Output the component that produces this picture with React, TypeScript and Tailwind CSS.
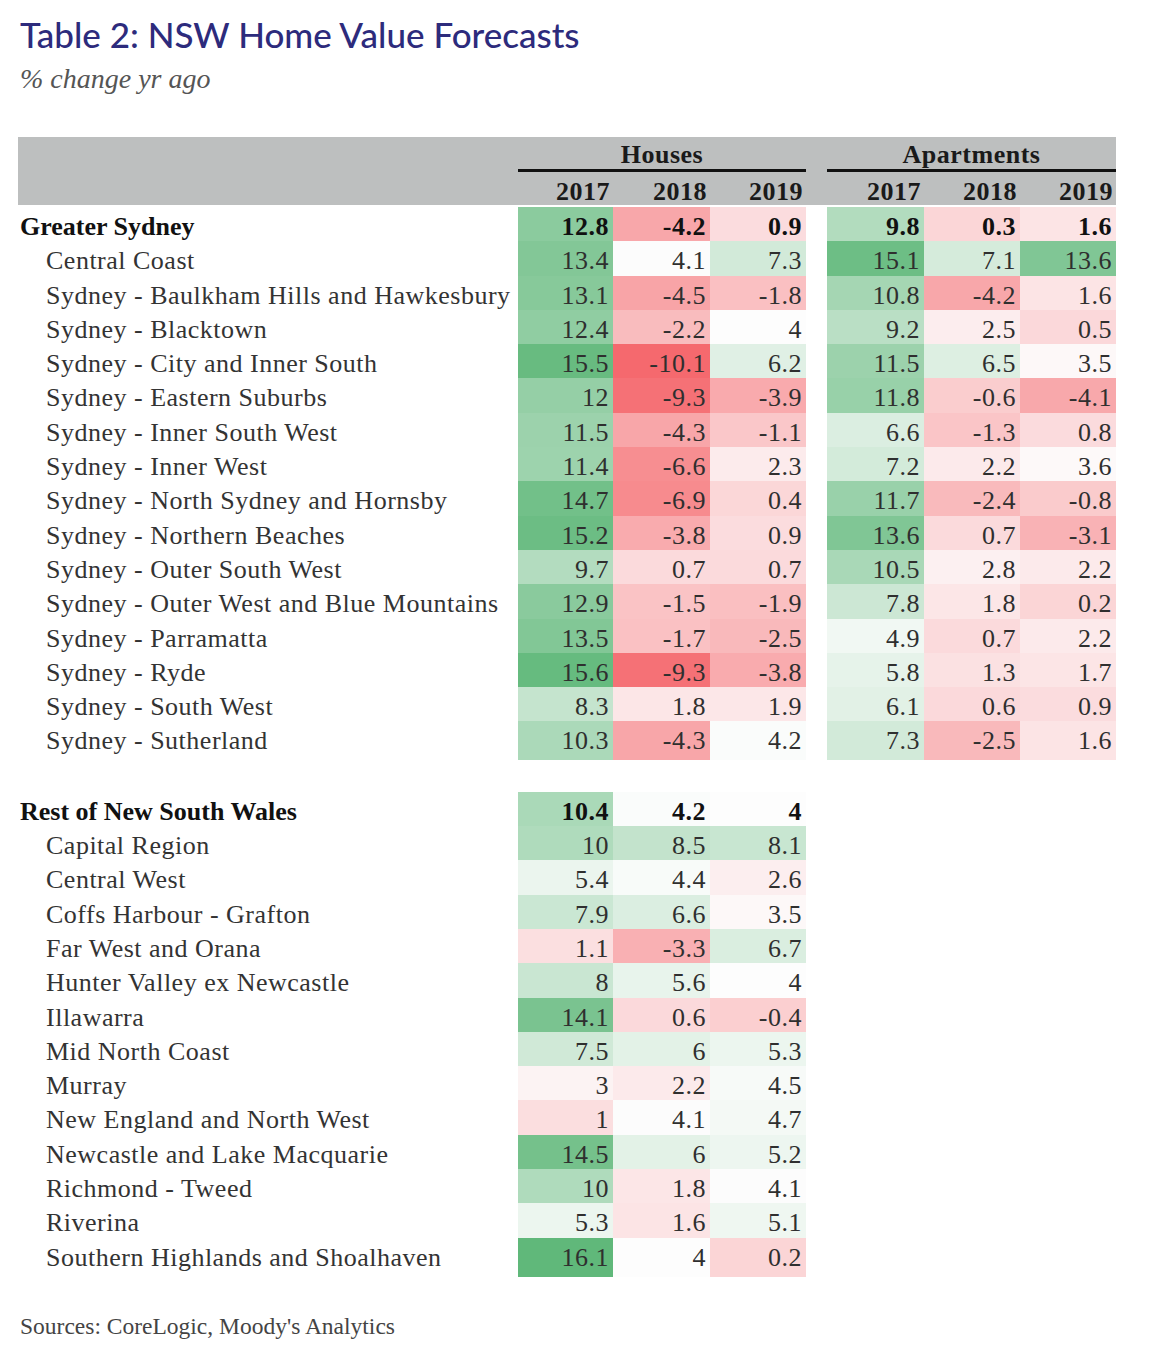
import React from 'react'

type Row = { label: string; h: number[]; a?: number[]; bold?: boolean }

const sydney: Row[] = [
  { label: 'Greater Sydney', h: [12.8, -4.2, 0.9], a: [9.8, 0.3, 1.6], bold: true },
  { label: 'Central Coast', h: [13.4, 4.1, 7.3], a: [15.1, 7.1, 13.6] },
  { label: 'Sydney - Baulkham Hills and Hawkesbury', h: [13.1, -4.5, -1.8], a: [10.8, -4.2, 1.6] },
  { label: 'Sydney - Blacktown', h: [12.4, -2.2, 4], a: [9.2, 2.5, 0.5] },
  { label: 'Sydney - City and Inner South', h: [15.5, -10.1, 6.2], a: [11.5, 6.5, 3.5] },
  { label: 'Sydney - Eastern Suburbs', h: [12, -9.3, -3.9], a: [11.8, -0.6, -4.1] },
  { label: 'Sydney - Inner South West', h: [11.5, -4.3, -1.1], a: [6.6, -1.3, 0.8] },
  { label: 'Sydney - Inner West', h: [11.4, -6.6, 2.3], a: [7.2, 2.2, 3.6] },
  { label: 'Sydney - North Sydney and Hornsby', h: [14.7, -6.9, 0.4], a: [11.7, -2.4, -0.8] },
  { label: 'Sydney - Northern Beaches', h: [15.2, -3.8, 0.9], a: [13.6, 0.7, -3.1] },
  { label: 'Sydney - Outer South West', h: [9.7, 0.7, 0.7], a: [10.5, 2.8, 2.2] },
  { label: 'Sydney - Outer West and Blue Mountains', h: [12.9, -1.5, -1.9], a: [7.8, 1.8, 0.2] },
  { label: 'Sydney - Parramatta', h: [13.5, -1.7, -2.5], a: [4.9, 0.7, 2.2] },
  { label: 'Sydney - Ryde', h: [15.6, -9.3, -3.8], a: [5.8, 1.3, 1.7] },
  { label: 'Sydney - South West', h: [8.3, 1.8, 1.9], a: [6.1, 0.6, 0.9] },
  { label: 'Sydney - Sutherland', h: [10.3, -4.3, 4.2], a: [7.3, -2.5, 1.6] },
]

const rest: Row[] = [
  { label: 'Rest of New South Wales', h: [10.4, 4.2, 4], bold: true },
  { label: 'Capital Region', h: [10, 8.5, 8.1] },
  { label: 'Central West', h: [5.4, 4.4, 2.6] },
  { label: 'Coffs Harbour - Grafton', h: [7.9, 6.6, 3.5] },
  { label: 'Far West and Orana', h: [1.1, -3.3, 6.7] },
  { label: 'Hunter Valley ex Newcastle', h: [8, 5.6, 4] },
  { label: 'Illawarra', h: [14.1, 0.6, -0.4] },
  { label: 'Mid North Coast', h: [7.5, 6, 5.3] },
  { label: 'Murray', h: [3, 2.2, 4.5] },
  { label: 'New England and North West', h: [1, 4.1, 4.7] },
  { label: 'Newcastle and Lake Macquarie', h: [14.5, 6, 5.2] },
  { label: 'Richmond - Tweed', h: [10, 1.8, 4.1] },
  { label: 'Riverina', h: [5.3, 1.6, 5.1] },
  { label: 'Southern Highlands and Shoalhaven', h: [16.1, 4, 0.2] },
]

// excel-ish 3 colour scale: red -> white -> green
function heat(v: number) {
  const mid = 4
  const white = [253, 253, 253]
  const end = v < mid ? [245, 105, 110] : [96, 184, 122]
  const t = v < mid ? Math.min(1, (mid - v) / 14.1) : Math.min(1, (v - mid) / 12.1)
  const c = white.map((w, i) => Math.round(w + (end[i] - w) * t))
  return `rgb(${c[0]}, ${c[1]}, ${c[2]})`
}

const serif = "font-['Liberation_Serif','DejaVu_Serif',serif]"
const cols = 'grid grid-cols-[500px_95px_97px_96px_21px_97px_96px_96px]'

function Cell({ v, bold }: { v?: number; bold?: boolean }) {
  if (v === undefined) return <div />
  return (
    <div
      className={`flex items-center justify-end pr-[4px] text-[26px] tracking-[0.5px] ${
        bold ? 'font-bold text-[#111]' : 'text-[#2f2f2f]'
      }`}
      style={{ backgroundColor: heat(v) }}
    >
      {v}
    </div>
  )
}

function TableRow({ row }: { row: Row }) {
  return (
    <div className={`${cols} h-[34.3px]`}>
      <div
        className={`flex items-center whitespace-nowrap text-[26px] tracking-[0.5px] ${
          row.bold ? 'pl-[2px] font-bold tracking-[0px] text-[#111]' : 'pl-[28px] text-[#333]'
        }`}
      >
        {row.label}
      </div>
      {row.h.map((v, i) => (
        <Cell key={i} v={v} bold={row.bold} />
      ))}
      <div />
      {row.a ? row.a.map((v, i) => <Cell key={i} v={v} bold={row.bold} />) : null}
    </div>
  )
}

function Years() {
  return (
    <>
      {['2017', '2018', '2019'].map((y) => (
        <div key={y} className="flex items-center justify-end pr-[3px]">
          {y}
        </div>
      ))}
    </>
  )
}

export default function App() {
  return (
    <div className={`min-h-[1366px] w-[1160px] bg-white pl-[18px] ${serif}`}>
      <h1 className="pt-[13px] pl-[2px] font-['Lato','Open_Sans',sans-serif] text-[35px] font-medium leading-[42px] text-[#2d2b7c]">
        Table 2: NSW Home Value Forecasts
      </h1>
      <p className="mt-[7px] pl-[2px] text-[28px] italic leading-[34px] text-[#555]">% change yr ago</p>

      <div className="mt-[41px] w-[1098px] bg-[#bdbfbf] text-[26px] font-bold tracking-[0.5px] text-[#1a1a1a]">
        <div className="grid h-[35px] grid-cols-[500px_288px_21px_289px]">
          <div />
          <div className="flex items-end justify-center border-b-[3px] border-[#111] pb-[1px] leading-none">Houses</div>
          <div />
          <div className="flex items-end justify-center border-b-[3px] border-[#111] pb-[1px] leading-none">Apartments</div>
        </div>
        <div className={`${cols} h-[33px]`}>
          <div />
          <Years />
          <div />
          <Years />
        </div>
      </div>

      <div className="mt-[2px]">
        {sydney.map((r) => (
          <TableRow key={r.label} row={r} />
        ))}
      </div>

      <div className="mt-[36px]">
        {rest.map((r) => (
          <TableRow key={r.label} row={r} />
        ))}
      </div>

      <p className="mt-[37px] pl-[2px] text-[23.5px] text-[#444]">Sources: CoreLogic, Moody's Analytics</p>
    </div>
  )
}
